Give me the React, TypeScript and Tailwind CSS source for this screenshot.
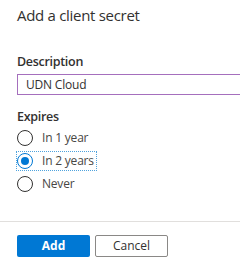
import React from "react";

function Radio({ label, checked, focused }: { label: string; checked?: boolean; focused?: boolean }) {
  return (
    <div className="h-[23px] flex items-center">
      <div
        className={
          "flex items-center h-[18px] pr-[2px] " +
          (focused ? "outline outline-1 outline-dotted outline-[#4fa3dd]" : "")
        }
      >
        <div
          className={
            "w-[16px] h-[16px] rounded-full border flex items-center justify-center " +
            (checked ? "border-[#0078d4]" : "border-[#323130]")
          }
        >
          {checked && <div className="w-[8px] h-[8px] rounded-full bg-[#0078d4]" />}
        </div>
        <span className="ml-[9px] text-[12px] tracking-[-0.2px] leading-[18px] text-[#484644]">{label}</span>
      </div>
    </div>
  );
}

export default function App() {
  return (
    <div className="w-[240px] h-[265px] bg-white overflow-hidden font-['Open_Sans',sans-serif]">
      <div className="pl-[17px] pt-[4px]">
        <div className="text-[15px] tracking-[-0.3px] leading-[22px] text-[#323130]">Add a client secret</div>
        <div className="mt-[27px] text-[12.5px] tracking-[-0.3px] leading-[18px] font-semibold text-[#323130]">
          Description
        </div>
        <div className="mt-[3px] w-[226px] h-[21px] border border-[#a56fbd] flex items-center pl-[8px] text-[12px] tracking-[-0.2px] text-[#323130]">
          UDN Cloud
        </div>
        <div className="mt-[13px] text-[12.5px] tracking-[-0.3px] leading-[18px] font-semibold text-[#323130]">
          Expires
        </div>
        <div className="flex flex-col">
          <Radio label="In 1 year" />
          <Radio label="In 2 years" checked focused />
          <Radio label="Never" />
        </div>
      </div>
      <div className="mt-[26px] h-px bg-[#e1dfdd]" />
      <div className="pl-[17px] mt-[13px] flex gap-[5px]">
        <button className="w-[73px] h-[22px] bg-[#0078d4] text-white text-[12px] font-bold leading-none rounded-[2px]">
          Add
        </button>
        <button className="w-[73px] h-[22px] bg-white border border-[#8a8886] text-[#323130] text-[12px] leading-none rounded-[2px]">
          Cancel
        </button>
      </div>
    </div>
  );
}
